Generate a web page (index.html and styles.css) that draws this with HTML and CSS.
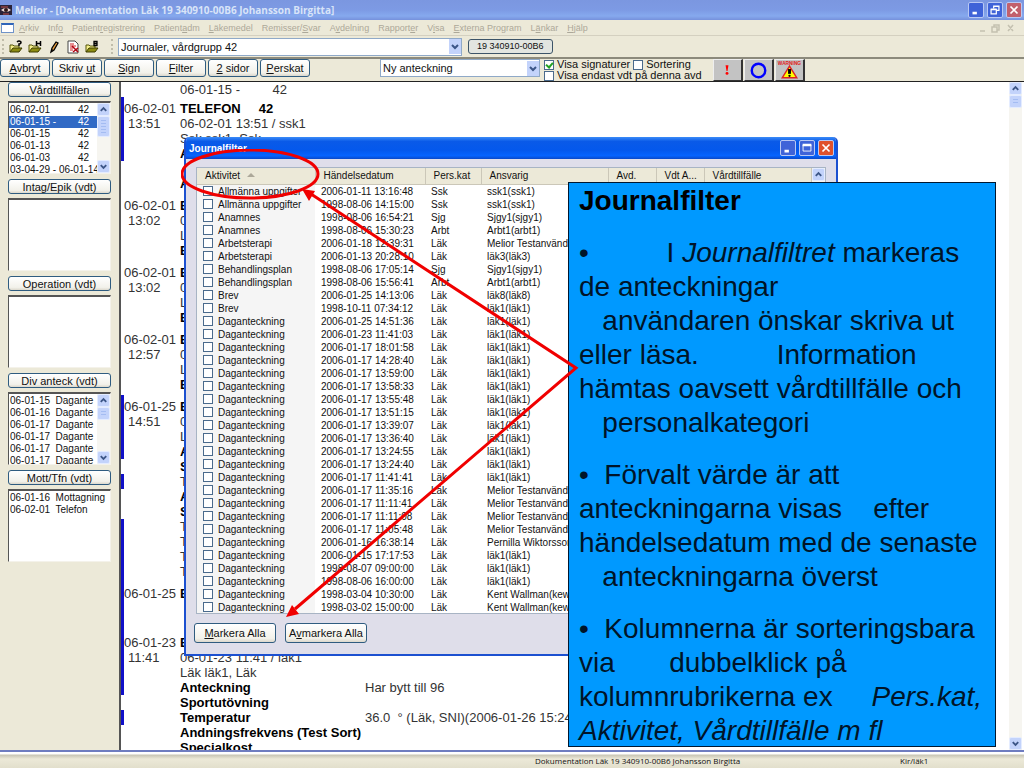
FILE: index.html
```html
<!DOCTYPE html>
<html lang="sv">
<head>
    <meta charset="UTF-8">
    <meta name="viewport" content="width=device-width, initial-scale=1.0">
    <title>Melior</title>
    <link rel="stylesheet" href="styles.css">
</head>
<body>
    <svg class="defs" aria-hidden="true">
        <symbol id="up" viewBox="0 0 12 12"><path d="M3 7.5 6 4.5 9 7.5" fill="none" stroke="#3c5687" stroke-width="2"/></symbol>
        <symbol id="down" viewBox="0 0 12 12"><path d="M3 4.5 6 7.5 9 4.5" fill="none" stroke="#3c5687" stroke-width="2"/></symbol>
        <symbol id="folder" viewBox="0 0 14 14">
            <path d="M1 12V5h3l1 1h5v2" fill="#f4ee8a" stroke="#55550a"/>
            <path d="M1 12 4 8h9l-3 4z" fill="#8c8c12" stroke="#3c3c00"/>
        </symbol>
        <symbol id="min" viewBox="0 0 16 16"><path d="M4 11.500h5" stroke="#fff" stroke-width="3"/></symbol>
        <symbol id="max" viewBox="0 0 16 16"><path d="M3.500 4.500h9v7h-9z" fill="none" stroke="#fff"/><path d="M3 4.500h10" stroke="#fff" stroke-width="3"/></symbol>
        <symbol id="restore" viewBox="0 0 16 16"><path d="M6.500 6V3.500h6v5H10M3.500 7.500h6v5h-6zM3 7h7M6 4h7" fill="none" stroke="#fff" stroke-width="1.400"/></symbol>
        <symbol id="close" viewBox="0 0 16 16"><path d="m4 4 8 8M12 4l-8 8" stroke="#fff" stroke-width="2"/></symbol>
    </svg>

    <header class="titlebar">
        <svg class="app-icon" viewBox="0 0 12 12" aria-hidden="true">
            <path d="M0 1h12v10H0z" fill="#2a2238"/>
            <path d="M1 6q5-4 10 0-5 4-10 0z" fill="#f0dcd8"/>
            <circle cx="6" cy="6" r="2" fill="#301818"/>
            <path d="M1 3h7M3 10h6" stroke="#c05048"/>
        </svg>
        <h1>Melior - [Dokumentation Läk 19 340910-00B6 Johansson Birgitta]</h1>
        <div class="window-buttons">
            <button type="button" aria-label="Minimera"><svg><use href="#min"/></svg></button>
            <button type="button" aria-label="Återställ"><svg><use href="#restore"/></svg></button>
            <button type="button" class="close" aria-label="Stäng"><svg><use href="#close"/></svg></button>
        </div>
    </header>

    <nav class="menubar">
        <span class="doc-icon"></span>
        <a href="#"><u>A</u>rkiv</a>
        <a href="#">Inf<u>o</u></a>
        <a href="#">Patient<u>r</u>egistrering</a>
        <a href="#">Patient<u>a</u>dm</a>
        <a href="#"><u>L</u>äkemedel</a>
        <a href="#">Remisser/<u>S</u>var</a>
        <a href="#">A<u>v</u>delning</a>
        <a href="#">Rapport<u>e</u>r</a>
        <a href="#">V<u>i</u>sa</a>
        <a href="#"><u>E</u>xterna Program</a>
        <a href="#">L<u>ä</u>nkar</a>
        <a href="#"><u>H</u>jälp</a>
        <svg class="child-buttons" viewBox="0 0 40 12" aria-hidden="true">
            <path d="M2 9h5M16 5V3h5v5h-2M14 5h5v5h-5zM30 3l5 6M35 3l-5 6" fill="none" stroke="#c4c1b0" stroke-width="1.500"/>
        </svg>
    </nav>

    <div class="toolbar">
        <span class="grip"></span>
        <button type="button" aria-label="Sök patient"><svg viewBox="0 0 14 14"><use href="#folder"/><path d="M8 2q2-2 4 0 0 2-2 2v2" fill="none" stroke="#000" stroke-width="1.500"/></svg></button>
        <button type="button" aria-label="Hämta"><svg viewBox="0 0 14 14"><use href="#folder"/><path d="M8.500 1v5M12.500 1v5M8 3.500h5" stroke="#000" stroke-width="1.500"/></svg></button>
        <button type="button" aria-label="Skriv"><svg viewBox="0 0 14 14"><path d="M4 12 5 8l4-6 2 1-4 7z" fill="#e8a040" stroke="#000" stroke-width="1.300"/><path d="m4 12 1-3 1 1z"/></svg></button>
        <button type="button" aria-label="Dokument"><svg viewBox="0 0 14 14"><path d="M2 1h7l3 3v9H2z" fill="#fff" stroke="#444"/><path d="M4 4h4M4 6h6M4 8h3M4 10h3" stroke="#d02020"/><path d="m6 6 6 6M12 8l-5 4" stroke="#b00010" stroke-width="1.500"/></svg></button>
        <button type="button" aria-label="Bläddra"><svg viewBox="0 0 14 14"><use href="#folder"/><path d="M9 1.500h3v4H9zM9 3.500h3" fill="none" stroke="#000" stroke-width="1.300"/></svg></button>
        <span class="grip second"></span>
        <div class="combo journals">
            <select aria-label="Journaler"><option>Journaler, vårdgrupp 42</option></select>
            <svg><use href="#down"/></svg>
        </div>
        <span class="patient-id">19 340910-00B6</span>
    </div>

    <div class="actionbar">
        <button type="button" class="action"><u>A</u>vbryt</button>
        <button type="button" class="action">Skriv <u>u</u>t</button>
        <button type="button" class="action"><u>S</u>ign</button>
        <button type="button" class="action"><u>F</u>ilter</button>
        <button type="button" class="action"><u>2</u> sidor</button>
        <button type="button" class="action"><u>P</u>erskat</button>
        <div class="combo notes">
            <select aria-label="Anteckning"><option>Ny anteckning</option></select>
            <svg><use href="#down"/></svg>
        </div>
        <div class="options">
            <label><input type="checkbox" checked>Visa signaturer</label>
            <label><input type="checkbox">Sortering</label>
            <label class="wide"><input type="checkbox">Visa endast vdt på denna avd</label>
        </div>
        <div class="alerts">
            <button type="button" aria-label="Viktigt"><svg viewBox="0 0 28 20"><path d="M12 5h3l-1 6h-1z" fill="#f00"/><circle cx="13.500" cy="13.500" r="1.500" fill="#f00"/></svg></button>
            <button type="button" aria-label="Cirkel"><svg viewBox="0 0 28 20"><circle cx="14" cy="10.500" r="7" fill="none" stroke="#00f" stroke-width="2.500"/></svg></button>
            <button type="button" aria-label="Varning"><svg viewBox="0 0 28 20"><text x="14" y="5" class="warning-text">WARNING</text><path d="m14 6 7.500 12h-15z" fill="#ff0" stroke="#d22" stroke-width="1.500"/><path d="M14 9v5" stroke="#000" stroke-width="3"/><circle cx="14" cy="16" r="1.200"/></svg></button>
        </div>
    </div>

    <main>
        <aside class="sidebar">
            <button type="button">Vårdtillfällen</button>
            <div class="list">
                <ul class="visits">
                    <li>06-02-01<span>42</span></li>
                    <li class="selected">06-01-15 -<span>42</span></li>
                    <li>06-01-15<span>42</span></li>
                    <li>06-01-13<span>42</span></li>
                    <li>06-01-03<span>42</span></li>
                    <li>03-04-29 - 06-01-14</li>
                </ul>
                <div class="scrollbar"><svg><use href="#up"/></svg><i class="tall"></i><svg class="end"><use href="#down"/></svg></div>
            </div>
            <button type="button">Intag/Epik (vdt)</button>
            <div class="list"></div>
            <button type="button">Operation (vdt)</button>
            <div class="list"></div>
            <button type="button">Div anteck (vdt)</button>
            <div class="list">
                <ul>
                    <li>06-01-15&nbsp; Dagante</li>
                    <li>06-01-16&nbsp; Dagante</li>
                    <li>06-01-17&nbsp; Dagante</li>
                    <li>06-01-17&nbsp; Dagante</li>
                    <li>06-01-17&nbsp; Dagante</li>
                    <li>06-01-17&nbsp; Dagante</li>
                </ul>
                <div class="scrollbar"><svg><use href="#up"/></svg><i></i><svg class="end"><use href="#down"/></svg></div>
            </div>
            <button type="button">Mott/Tfn (vdt)</button>
            <div class="list">
                <ul>
                    <li>06-01-16&nbsp; Mottagning</li>
                    <li>06-02-01&nbsp; Telefon</li>
                </ul>
            </div>
        </aside>

        <section class="journal">
            <div class="entries">
                <div class="line"><span></span><span class="pre">06-01-15 -         42</span></div>
                <div class="entry">
                    <div class="line changed"><span>06-02-01</span><b class="pre">TELEFON     42</b></div>
                    <div class="line changed"><time>13:51</time><span>06-02-01 13:51 / ssk1</span></div>
                    <div class="line changed"><span></span><span>Ssk ssk1, Ssk</span></div>
                    <div class="line changed"><span></span><b>A</b></div>
                    <div class="line"></div>
                    <div class="line"><span></span><b>A</b></div>
                </div>
                <div class="entry">
                    <div class="line"><span>06-02-01</span><b>E</b></div>
                    <div class="line"><time>13:02</time><span>0</span></div>
                    <div class="line"><span></span><span>L</span></div>
                    <div class="line"><span></span><b>E</b></div>
                </div>
                <div class="entry">
                    <div class="line"><span>06-02-01</span><b>E</b></div>
                    <div class="line"><time>13:02</time><span>0</span></div>
                    <div class="line"><span></span><span>L</span></div>
                    <div class="line"><span></span><b>E</b></div>
                </div>
                <div class="entry">
                    <div class="line"><span>06-02-01</span><b>E</b></div>
                    <div class="line"><time>12:57</time><span>0</span></div>
                    <div class="line"><span></span><span>L</span></div>
                    <div class="line"><span></span><b>E</b></div>
                </div>
                <div class="entry">
                    <div class="line changed"><span>06-01-25</span><b>E</b></div>
                    <div class="line changed"><time>14:51</time><span>0</span></div>
                    <div class="line changed"><span></span><span>L</span></div>
                    <div class="line changed"><span></span><b>A</b></div>
                    <div class="line"><span></span><b>S</b></div>
                    <div class="line changed"><span></span><span>T</span></div>
                    <div class="line"><span></span><b>A</b></div>
                    <div class="line"><span></span><b>S</b></div>
                    <div class="line changed"><span></span><span>T</span></div>
                    <div class="line changed"><span></span><span>T</span></div>
                    <div class="line changed"><span></span><span>T</span></div>
                    <div class="line changed"><span></span><span>T</span></div>
                </div>
                <div class="entry">
                    <div class="line changed"><span>06-01-25</span><b>E</b></div>
                    <div class="line changed"></div>
                    <div class="line changed"></div>
                </div>
                <div class="entry">
                    <div class="line changed"><span>06-01-23</span><b>E</b></div>
                    <div class="line changed"><time>11:41</time><span>06-01-23 11:41 / läk1</span></div>
                    <div class="line changed"><span></span><span>Läk läk1, Läk</span></div>
                    <div class="line changed"><span></span><b>Anteckning</b><span>Har bytt till 96</span></div>
                    <div class="line"><span></span><b>Sportutövning</b></div>
                    <div class="line changed"><span></span><b>Temperatur</b><span>36.0 &nbsp;° (Läk, SNI)(2006-01-26 15:24</span></div>
                    <div class="line"><span></span><b>Andningsfrekvens (Test Sort)</b></div>
                    <div class="line"><span></span><b>Specialkost</b></div>
                </div>
            </div>
            <div class="scrollbar"><svg><use href="#up"/></svg><i></i><svg class="end"><use href="#down"/></svg></div>
        </section>
    </main>

    <footer class="statusbar">
        <span></span>
        <span>Dokumentation Läk 19 340910-00B6 Johansson Birgitta</span>
        <span>Kir/läk1</span>
    </footer>

    <section class="dialog" role="dialog" aria-labelledby="dialog-title">
        <div class="dialog-title">
            <h2 id="dialog-title">Journalfilter</h2>
            <div class="window-buttons">
                <button type="button" aria-label="Minimera"><svg><use href="#min"/></svg></button>
                <button type="button" aria-label="Maximera"><svg><use href="#max"/></svg></button>
                <button type="button" class="close" aria-label="Stäng"><svg><use href="#close"/></svg></button>
            </div>
        </div>
        <div class="filter-list">
            <table>
                <colgroup>
                    <col class="c-activity"><col class="c-date"><col class="c-category"><col class="c-owner">
                    <col class="c-unit"><col class="c-unit"><col>
                </colgroup>
                <thead>
                    <tr>
                        <th>Aktivitet <svg class="sort" viewBox="0 0 8 4"><path d="M0 4 4 0l4 4z" fill="#aca899"/></svg></th>
                        <th>Händelsedatum</th><th>Pers.kat</th><th>Ansvarig</th><th>Avd.</th><th>Vdt A...</th><th>Vårdtillfälle</th>
                    </tr>
                </thead>
                <tbody id="rows"></tbody>
            </table>
            <div class="scrollbar"><svg><use href="#up"/></svg></div>
        </div>
        <div class="dialog-actions">
            <button type="button"><u>M</u>arkera Alla</button>
            <button type="button">A<u>v</u>markera Alla</button>
        </div>
    </section>

    <article class="note">
        <h2>Journalfilter</h2>
        <p>•          I <em>Journalfiltret</em> markeras
de anteckningar
   användaren önskar skriva ut
eller läsa.          Information
hämtas oavsett vårdtillfälle och
   personalkategori</p>
        <p>•  Förvalt värde är att
anteckningarna visas    efter
händelsedatum med de senaste
   anteckningarna överst</p>
        <p>•  Kolumnerna är sorteringsbara
via       dubbelklick på
kolumnrubrikerna ex     <em>Pers.kat,</em>
<em>Aktivitet, Vårdtillfälle m fl</em></p>
    </article>

    <svg class="pointer" viewBox="0 0 400 470" aria-hidden="true">
        <g fill="none" stroke="#f00000">
            <ellipse cx="69" cy="25" rx="68" ry="24" stroke-width="3"/>
            <path d="M130 45 395 219 114 460" stroke-width="3"/>
        </g>
        <path d="m121 40 13 2-6 10zM105 468l6-12 7 9z" fill="#f00000"/>
    </svg>

    <script>
        const rows = [
            ['Allmänna uppgifter', '2006-01-11 13:16:48', 'Ssk', 'ssk1(ssk1)'],
            ['Allmänna uppgifter', '1998-08-06 14:15:00', 'Ssk', 'ssk1(ssk1)'],
            ['Anamnes', '1998-08-06 16:54:21', 'Sjg', 'Sjgy1(sjgy1)'],
            ['Anamnes', '1998-08-06 15:30:23', 'Arbt', 'Arbt1(arbt1)'],
            ['Arbetsterapi', '2006-01-18 12:39:31', 'Läk', 'Melior Testanvändare'],
            ['Arbetsterapi', '2006-01-13 20:28:10', 'Läk', 'läk3(läk3)'],
            ['Behandlingsplan', '1998-08-06 17:05:14', 'Sjg', 'Sjgy1(sjgy1)'],
            ['Behandlingsplan', '1998-08-06 15:56:41', 'Arbt', 'Arbt1(arbt1)'],
            ['Brev', '2006-01-25 14:13:06', 'Läk', 'läk8(läk8)'],
            ['Brev', '1998-10-11 07:34:12', 'Läk', 'läk1(läk1)'],
            ['Daganteckning', '2006-01-25 14:51:36', 'Läk', 'läk1(läk1)'],
            ['Daganteckning', '2006-01-23 11:41:03', 'Läk', 'läk1(läk1)'],
            ['Daganteckning', '2006-01-17 18:01:58', 'Läk', 'läk1(läk1)'],
            ['Daganteckning', '2006-01-17 14:28:40', 'Läk', 'läk1(läk1)'],
            ['Daganteckning', '2006-01-17 13:59:00', 'Läk', 'läk1(läk1)'],
            ['Daganteckning', '2006-01-17 13:58:33', 'Läk', 'läk1(läk1)'],
            ['Daganteckning', '2006-01-17 13:55:48', 'Läk', 'läk1(läk1)'],
            ['Daganteckning', '2006-01-17 13:51:15', 'Läk', 'läk1(läk1)'],
            ['Daganteckning', '2006-01-17 13:39:07', 'Läk', 'läk1(läk1)'],
            ['Daganteckning', '2006-01-17 13:36:40', 'Läk', 'läk1(läk1)'],
            ['Daganteckning', '2006-01-17 13:24:55', 'Läk', 'läk1(läk1)'],
            ['Daganteckning', '2006-01-17 13:24:40', 'Läk', 'läk1(läk1)'],
            ['Daganteckning', '2006-01-17 11:41:41', 'Läk', 'läk1(läk1)'],
            ['Daganteckning', '2006-01-17 11:35:16', 'Läk', 'Melior Testanvändare'],
            ['Daganteckning', '2006-01-17 11:11:41', 'Läk', 'Melior Testanvändare'],
            ['Daganteckning', '2006-01-17 11:11:08', 'Läk', 'Melior Testanvändare'],
            ['Daganteckning', '2006-01-17 11:05:48', 'Läk', 'Melior Testanvändare'],
            ['Daganteckning', '2006-01-16 16:38:14', 'Läk', 'Pernilla Wiktorsson'],
            ['Daganteckning', '2006-01-15 17:17:53', 'Läk', 'läk1(läk1)'],
            ['Daganteckning', '1998-08-07 09:00:00', 'Läk', 'läk1(läk1)'],
            ['Daganteckning', '1998-08-06 16:00:00', 'Läk', 'läk1(läk1)'],
            ['Daganteckning', '1998-03-04 10:30:00', 'Läk', 'Kent Wallman(kewa)'],
            ['Daganteckning', '1998-03-02 15:00:00', 'Läk', 'Kent Wallman(kewa)']
        ];

        document.getElementById('rows').innerHTML = rows.map(r =>
            `<tr><td><label><input type="checkbox">${r[0]}</label></td><td>${r[1]}</td><td>${r[2]}</td><td>${r[3]}</td><td></td><td></td><td></td></tr>`
        ).join('');
    </script>
</body>
</html>
```
FILE: styles.css
```css
* {
    box-sizing: border-box;
}

body {
    margin: 0;
    height: 100vh;
    display: flex;
    flex-direction: column;
    position: relative;
    overflow: hidden;
    background: #ece9d8;
    color: #111;
    font-family: "Liberation Sans", Arial, sans-serif;
    font-size: 11px;
}

h1, h2, p, ul {
    margin: 0;
    padding: 0;
}

button, select, input {
    margin: 0;
    padding: 0;
    font: inherit;
    color: inherit;
}

svg {
    display: block;
}

.defs {
    position: absolute;
    width: 0;
    height: 0;
}

/* title bar */
.titlebar {
    display: flex;
    align-items: center;
    flex: none;
    height: 20px;
    padding-right: 2px;
    background: linear-gradient(#7b97e0, #7d9ae4 50%, #86a9ee 80%, #7691dc);
}

.app-icon {
    width: 12px;
    height: 14px;
    margin-right: 3px;
}

.titlebar h1 {
    flex: 1;
    font-family: "Open Sans", "Liberation Sans", sans-serif;
    font-size: 10px;
    color: #d8e4f8;
    white-space: nowrap;
}

.window-buttons {
    display: flex;
    gap: 3px;
}

.window-buttons button {
    width: 16px;
    height: 16px;
    border: 1px solid #b8c8f4;
    border-radius: 2px;
    background: #3f63d8;
}

.window-buttons svg {
    width: 14px;
    height: 14px;
}

.window-buttons .close {
    background: #c2606c;
}

.menubar {
    display: flex;
    align-items: center;
    flex: none;
    gap: 9px;
    height: 16px;
    padding: 0 6px 0 1px;
    border-bottom: 1px solid #d4d0c0;
    font-size: 9px;
}

.menubar a {
    color: #aca899;
    text-decoration: none;
    white-space: nowrap;
}

.doc-icon {
    width: 13px;
    height: 10px;
    margin-right: -4px;
    border: 1px solid #6f93c8;
    border-top: 2px solid #2f65b8;
    background: #fff;
}

.child-buttons {
    width: 40px;
    height: 12px;
    margin-left: auto;
}

.toolbar {
    display: flex;
    align-items: center;
    flex: none;
    height: 23px;
    padding-left: 2px;
    border-bottom: 2px solid #8c8a7c;
}

.toolbar button {
    width: 14px;
    height: 14px;
    margin-left: 5px;
    border: 0;
    background: none;
}

.toolbar button svg {
    width: 14px;
    height: 14px;
}

.grip {
    width: 2px;
    height: 15px;
    border-left: 2px dotted #c0bdaa;
}

.grip.second {
    margin: 0 5px 0 12px;
}

.combo {
    display: flex;
    align-items: center;
    height: 18px;
    border: 1px solid #8fa9c8;
    background: #fff;
}

.combo select {
    flex: 1;
    min-width: 0;
    height: 16px;
    padding-left: 2px;
    border: 0;
    appearance: none;
    background: none;
    font-size: 11px;
}

.combo svg {
    width: 12px;
    height: 15px;
    background: #c3d3fb;
}

.journals {
    flex: 0 1 344px;
}

.patient-id {
    margin-left: 6px;
    padding: 0 8px;
    border: 1px solid #3c5468;
    border-radius: 3px;
    background: #e2e5e0;
    font-size: 9px;
    line-height: 13px;
}

/* action bar */
.actionbar {
    display: flex;
    flex: none;
    gap: 2px;
    height: 23px;
    border-bottom: 1px solid #222;
}

.action {
    width: 50px;
    height: 18px;
}

.action,
.sidebar > button,
.dialog-actions button {
    border: 1px solid #2f5c80;
    border-radius: 3px;
    background: linear-gradient(#fff, #f2f1ea 80%, #dcd8cc);
    font-size: 11px;
    line-height: 12px;
    white-space: nowrap;
}

.notes {
    flex: 0 1 160px;
    margin: 0 2px 0 68px;
}

.options {
    display: flex;
    flex-wrap: wrap;
    align-content: flex-start;
    width: 167px;
    line-height: 11px;
}

.options label {
    display: flex;
    align-items: center;
    gap: 3px;
    margin-right: 3px;
    white-space: nowrap;
}

.options .wide {
    width: 100%;
    margin-right: 0;
}

input[type="checkbox"] {
    appearance: none;
    width: 10px;
    height: 10px;
    flex: none;
    border: 1px solid #4a6a8c;
    background: #fff;
}

.options input:checked {
    position: relative;
}

.options input:checked::after {
    content: "";
    position: absolute;
    left: 2px;
    top: 0;
    width: 3px;
    height: 5px;
    border: solid #21a121;
    border-width: 0 2px 2px 0;
    transform: rotate(40deg);
}

.alerts {
    display: flex;
    gap: 1px;
}

.alerts button {
    width: 30px;
    height: 22px;
    border: 1px solid;
    border-color: #eee #333 #333 #eee;
    border-right-width: 2px;
    background: #c3c3c3;
}

.alerts svg {
    width: 27px;
    height: 20px;
}

.warning-text {
    font-size: 5px;
    font-weight: bold;
    fill: #e02020;
    text-anchor: middle;
}

main {
    display: flex;
    flex: 1;
    min-height: 0;
    border-bottom: 2px solid #6f7dc0;
}

/* left lists */
.sidebar {
    display: flex;
    flex-direction: column;
    flex: none;
    width: 119px;
    padding: 0 8px;
}

.sidebar > button {
    height: 15px;
    flex: none;
}

.list {
    display: flex;
    flex: none;
    height: 73px;
    margin: 4px 0 5px;
    overflow: hidden;
    border: 1px solid #f4f2ea;
    border-top: 2px solid #555;
    border-left-color: #555;
    background: #fff;
    font-size: 10px;
    line-height: 12px;
}

.list ul {
    flex: 1;
    min-width: 0;
    padding-top: 1px;
    list-style: none;
    white-space: nowrap;
    overflow: hidden;
}

.list li {
    display: flex;
    padding-left: 1px;
}

.visits span {
    margin-left: auto;
    padding-right: 8px;
}

.list .selected {
    background: #316ac5;
    color: #fff;
}

.scrollbar {
    display: flex;
    flex-direction: column;
    flex: none;
    width: 13px;
    background: #f6f5f0;
}

.scrollbar svg {
    width: 13px;
    height: 13px;
    flex: none;
    border: 1px solid #e4ecff;
    border-radius: 2px;
    background: #c3d3fb;
}

.scrollbar i {
    height: 13px;
    flex: none;
    padding: 3px;
    border: 1px solid #e4ecff;
    border-radius: 2px;
    background: repeating-linear-gradient(#a4bcf2 0 1px, #c3d3fb 1px 3px) content-box, #c3d3fb;
}

.scrollbar .tall {
    height: 21px;
}

.scrollbar .end {
    margin-top: auto;
}

/* journal text */
.journal {
    display: flex;
    flex: 1;
    min-width: 0;
    border-left: 2px solid #555;
    background: #fff;
    font-size: 13px;
    line-height: 15px;
}

.entries {
    flex: 1;
    min-width: 0;
    overflow: hidden;
    color: #333;
}

.line {
    display: grid;
    grid-template-columns: 56px 185px 1fr;
    min-height: 15px;
    border-left: 3px solid transparent;
    white-space: nowrap;
}

.line.changed {
    border-left-color: #1010c8;
}

.line b {
    color: #000;
}

.pre {
    white-space: pre;
}

.line time {
    padding-left: 4px;
}

.entry .line:first-child {
    padding-top: 4px;
}

.entry .line:last-child {
    padding-bottom: 3px;
}

.journal .scrollbar {
    margin-right: 2px;
}

.statusbar {
    display: grid;
    grid-template-columns: 535fr 365fr 124fr;
    align-items: center;
    flex: none;
    height: 16px;
    padding-top: 2px;
    background: linear-gradient(#fff 0 2px, #c8c5b4 3px, #ece9d8 7px, #e2dfcc);
    font-family: "Open Sans", "Liberation Sans", sans-serif;
    font-size: 8px;
    line-height: 12px;
    white-space: nowrap;
}

/* filter window */
.dialog {
    position: absolute;
    left: 184px;
    top: 137px;
    width: 654px;
    border: 2px solid #1c50d0;
    border-top: 0;
    border-radius: 5px 5px 0 0;
    background: #dfdeea;
    overflow: hidden;
}

.dialog-title {
    display: flex;
    align-items: center;
    justify-content: space-between;
    height: 22px;
    padding: 0 2px 0 3px;
    background: linear-gradient(#3b8cf8, #0a5ae8 20%, #0458ec 60%, #0664ff 85%, #0a48c8);
}

.dialog-title h2 {
    font-size: 10px;
    color: #fff;
}

.dialog-title .close {
    background: #e0512c;
}

.filter-list {
    display: flex;
    height: 447px;
    margin: 8px 10px 0;
    overflow: hidden;
    border: 1px solid #a8b4c4;
    background: #fff;
}

.filter-list table {
    flex: 1;
    table-layout: fixed;
    border-collapse: collapse;
    font-size: 10px;
    line-height: 13px;
    align-self: flex-start;
}

.c-activity {
    width: 118px;
    background: #f5f5f5;
}

.c-date {
    width: 110px;
}

.c-category {
    width: 56px;
}

.c-owner {
    width: 127px;
}

.c-unit {
    width: 48px;
}

.filter-list th {
    height: 16px;
    padding: 0 0 0 8px;
    background: #ece9d8;
    border-right: 1px solid #cbc7b8;
    border-bottom: 1px solid #cbc7b8;
    font-weight: normal;
    text-align: left;
    white-space: nowrap;
}

.sort {
    display: inline-block;
    width: 8px;
    height: 4px;
    margin: 0 0 2px 4px;
}

.filter-list td {
    height: 13px;
    padding: 0 0 0 6px;
    overflow: hidden;
    white-space: nowrap;
}

.filter-list label {
    display: flex;
    align-items: center;
    gap: 5px;
}

.dialog-actions {
    display: flex;
    gap: 9px;
    padding: 9px 8px 11px;
}

.dialog-actions button {
    width: 82px;
    height: 20px;
}

/* explanation box */
.note {
    position: absolute;
    left: 568px;
    top: 182px;
    width: 428px;
    height: 565px;
    padding: 1px 10px;
    border: 1px solid #001830;
    background: #0099ff;
    color: #001428;
    font-size: 28px;
    line-height: 34px;
    overflow: hidden;
}

.note h2 {
    font-size: 28px;
    color: #000;
}

.note p {
    margin-top: 18px;
    white-space: pre;
}

.pointer {
    position: absolute;
    left: 181px;
    top: 149px;
    width: 400px;
    height: 470px;
    pointer-events: none;
}
```
